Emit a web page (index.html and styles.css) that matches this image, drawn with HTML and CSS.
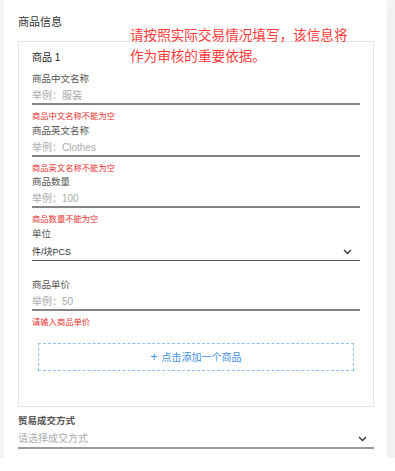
FILE: index.html
```html
<!DOCTYPE html>
<html>
	<head>
		<meta charset="UTF-8" />
		<meta name="viewport" content="width=device-width, initial-scale=1.0" />
		<link rel="stylesheet" href="styles.css">
	</head>
	<body>
	<div class="page">
		<div class="panel">
			<div class="section-title">商品信息</div>

			<div class="goods-card">
				<div class="goods-no">商品 1</div>

				<div class="field">
					<div class="field-label">商品中文名称</div>
					<div class="field-input placeholder">举例：服装</div>
					<div class="field-error">商品中文名称不能为空</div>
				</div>

				<div class="field">
					<div class="field-label">商品英文名称</div>
					<div class="field-input placeholder">举例：Clothes</div>
					<div class="field-error">商品英文名称不能为空</div>
				</div>

				<div class="field">
					<div class="field-label">商品数量</div>
					<div class="field-input placeholder">举例：100</div>
					<div class="field-error">商品数量不能为空</div>
				</div>

				<div class="field field-select">
					<div class="field-label">单位</div>
					<div class="select-row">
						<span class="select-value">件/块PCS</span>
						<svg class="chevron" width="9" height="6" viewBox="0 0 9 6"><path d="M1 1 L4.5 4.5 L8 1" fill="none" stroke="#333" stroke-width="1.3"/></svg>
					</div>
					<div class="field-error"></div>
				</div>

				<div class="field">
					<div class="field-label">商品单价</div>
					<div class="field-input placeholder">举例：50</div>
					<div class="field-error">请输入商品单价</div>
				</div>

				<div class="add-btn"><span class="plus">+</span> 点击添加一个商品</div>
			</div>

			<div class="trade">
				<div class="trade-label">贸易成交方式</div>
				<div class="trade-select">
					<span class="placeholder">请选择成交方式</span>
					<svg class="chevron" width="9" height="6" viewBox="0 0 9 6"><path d="M1 1 L4.5 4.5 L8 1" fill="none" stroke="#333" stroke-width="1.3"/></svg>
				</div>
			</div>

			<div class="note">请按照实际交易情况填写，该信息将<br>作为审核的重要依据。</div>
		</div>
		<div class="track"></div>
	</div>
	</body>
</html>
```

FILE: styles.css
```css
body {
	margin: 0;
	background: #fff;
	font-family: "Liberation Sans", "Noto Sans CJK SC", sans-serif;
}

.page {
	display: flex;
	width: 395px;
	height: 458px;
	padding-left: 4px;
	box-sizing: border-box;
	background: #f4f4f5;
}

.panel {
	position: relative;
	width: 383px;
	background: #fff;
	padding: 14px 13px 12px 14px;
	box-sizing: border-box;
}

.track {
	width: 6px;
	margin-top: 9px;
	background: #f1f1f2;
}

.section-title {
	font-size: 11px;
	line-height: 16px;
	color: #333;
}

.goods-card {
	margin-top: 11px;
	border: 1px solid #e4e4e4;
	padding: 9px 13px 35px 13px;
}

.goods-no {
	font-size: 10px;
	line-height: 14px;
	color: #222;
	margin-bottom: 7px;
}

.field {
	margin-bottom: 1.5px;
}

.field-label {
	font-size: 9.5px;
	line-height: 14px;
	color: #555;
}

.field-input {
	padding: 4px 0 1px 0;
	line-height: 12px;
	font-size: 10px;
	border-bottom: 2px solid #858585;
}

.placeholder {
	color: #ababab;
	font-size: 10px;
}

.field-error {
	margin-top: 5px;
	height: 12px;
	line-height: 12px;
	font-size: 8.3px;
	color: #e8322f;
}

.field-select .field-error {
	margin-top: 4px;
}

.select-row {
	display: flex;
	align-items: center;
	justify-content: space-between;
	padding: 5px 8px 2px 0;
	line-height: 12px;
	border-bottom: 1px solid #555;
}

.select-value {
	font-size: 9px;
	color: #333;
}

.chevron {
	display: block;
}

.add-btn {
	margin: 14.5px 6px 0 6px;
	height: 28px;
	box-sizing: border-box;
	border: 1px dashed #8fbff0;
	display: flex;
	align-items: center;
	justify-content: center;
	font-size: 10px;
	color: #3d8ee6;
}

.plus {
	font-size: 12px;
	margin-right: 4px;
	font-weight: 300;
}

.trade {
	margin-top: 7px;
}

.trade-label {
	font-size: 9.5px;
	line-height: 14px;
	color: #555;
	font-weight: bold;
}

.trade-select {
	display: flex;
	align-items: center;
	justify-content: space-between;
	padding: 5px 7px 2px 0;
	line-height: 12px;
	border-bottom: 2px solid #9a9a9a;
}

.note {
	position: absolute;
	left: 126px;
	top: 25px;
	font-size: 13.6px;
	line-height: 21px;
	color: #ff3b3b;
}
```
